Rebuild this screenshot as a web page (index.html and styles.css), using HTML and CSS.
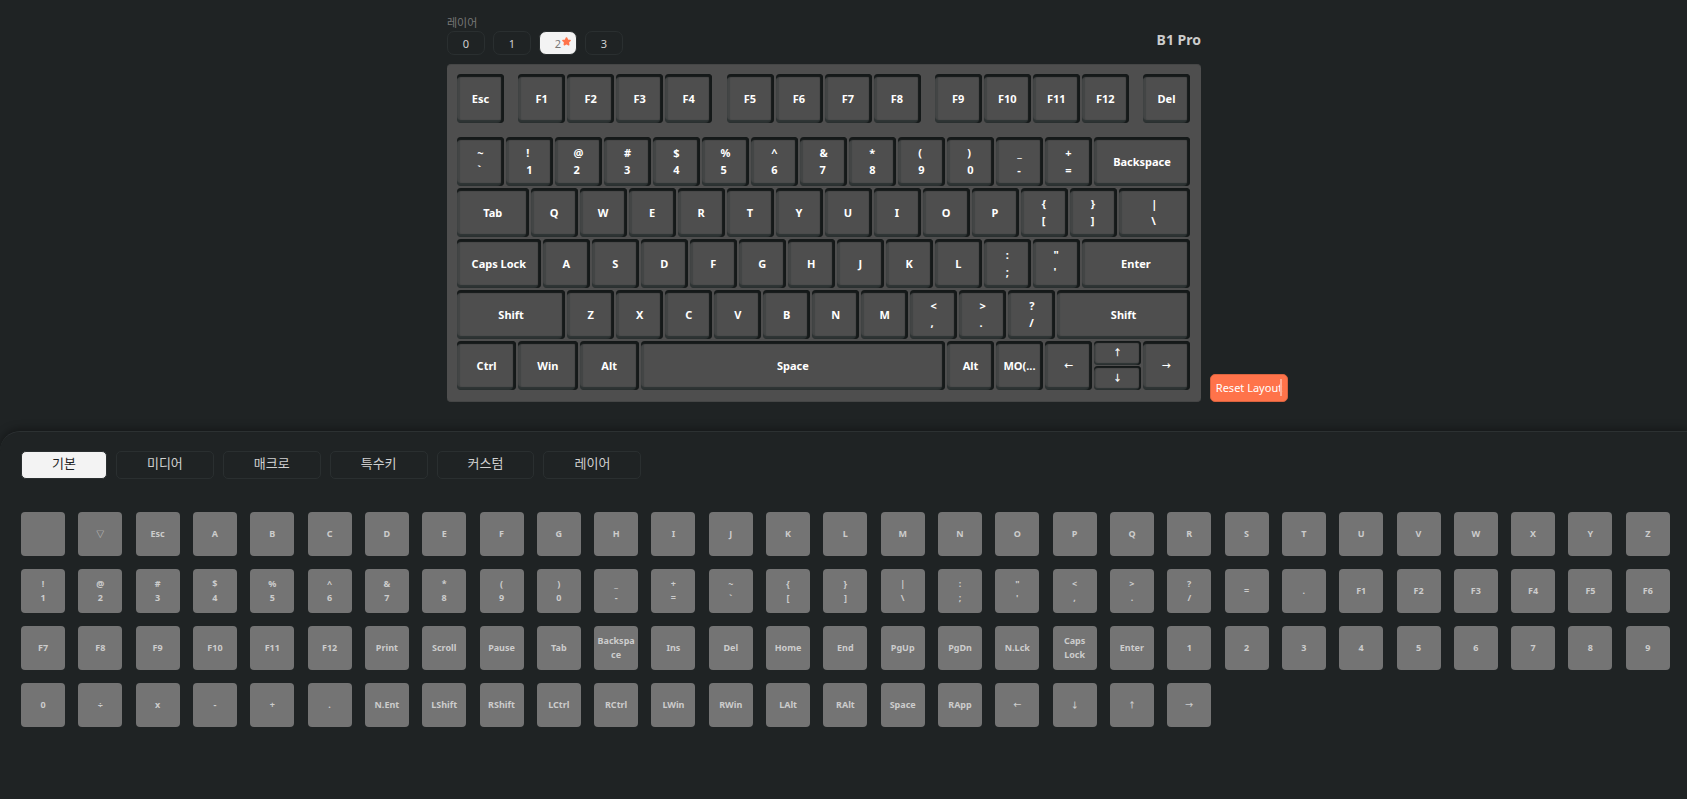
FILE: index.html
```html
<!DOCTYPE html>
<html lang="ko">
<head>
<meta charset="utf-8">
<title>B1 Pro</title>
<link rel="stylesheet" href="styles.css">
</head>
<body>
<main class="stage">
  <div class="editor">
    <header class="toolbar">
      <div>
        <h2 class="layer-title">레이어</h2>
        <div class="layers">
          <button class="layer">0</button>
          <button class="layer">1</button>
          <button class="layer layer-active">2<svg class="star" viewBox="0 0 24 24" aria-hidden="true"><path d="M12 2.500l2.900 6 6.600.9-4.800 4.600 1.200 6.600-5.900-3.200-5.900 3.200 1.200-6.600L2.500 9.400l6.600-.9z"/></svg></button>
          <button class="layer">3</button>
        </div>
      </div>
      <h1 class="device">B1 Pro</h1>
    </header>
    <div class="board">
      <div class="row row-fn">
        <button class="key">Esc</button><i class="gap"></i>
        <button class="key">F1</button><button class="key">F2</button><button class="key">F3</button><button class="key">F4</button><i class="gap"></i>
        <button class="key">F5</button><button class="key">F6</button><button class="key">F7</button><button class="key">F8</button><i class="gap"></i>
        <button class="key">F9</button><button class="key">F10</button><button class="key">F11</button><button class="key">F12</button><i class="gap"></i>
        <button class="key">Del</button>
      </div>
      <div class="row">
        <button class="key"><span class="pair">~<br>`</span></button>
        <button class="key"><span class="pair">!<br>1</span></button>
        <button class="key"><span class="pair">@<br>2</span></button>
        <button class="key"><span class="pair">#<br>3</span></button>
        <button class="key"><span class="pair">$<br>4</span></button>
        <button class="key"><span class="pair">%<br>5</span></button>
        <button class="key"><span class="pair">^<br>6</span></button>
        <button class="key"><span class="pair">&amp;<br>7</span></button>
        <button class="key"><span class="pair">*<br>8</span></button>
        <button class="key"><span class="pair">(<br>9</span></button>
        <button class="key"><span class="pair">)<br>0</span></button>
        <button class="key"><span class="pair">_<br>-</span></button>
        <button class="key"><span class="pair">+<br>=</span></button>
        <button class="key w-200">Backspace</button>
      </div>
      <div class="row">
        <button class="key w-150">Tab</button>
        <button class="key">Q</button><button class="key">W</button><button class="key">E</button><button class="key">R</button><button class="key">T</button><button class="key">Y</button><button class="key">U</button><button class="key">I</button><button class="key">O</button><button class="key">P</button>
        <button class="key"><span class="pair">{<br>[</span></button>
        <button class="key"><span class="pair">}<br>]</span></button>
        <button class="key w-150"><span class="pair">|<br>\</span></button>
      </div>
      <div class="row">
        <button class="key w-175">Caps Lock</button>
        <button class="key">A</button><button class="key">S</button><button class="key">D</button><button class="key">F</button><button class="key">G</button><button class="key">H</button><button class="key">J</button><button class="key">K</button><button class="key">L</button>
        <button class="key"><span class="pair">:<br>;</span></button>
        <button class="key"><span class="pair">"<br>'</span></button>
        <button class="key w-225">Enter</button>
      </div>
      <div class="row">
        <button class="key w-225">Shift</button>
        <button class="key">Z</button><button class="key">X</button><button class="key">C</button><button class="key">V</button><button class="key">B</button><button class="key">N</button><button class="key">M</button>
        <button class="key"><span class="pair">&lt;<br>,</span></button>
        <button class="key"><span class="pair">&gt;<br>.</span></button>
        <button class="key"><span class="pair">?<br>/</span></button>
        <button class="key w-275">Shift</button>
      </div>
      <div class="row">
        <button class="key w-125">Ctrl</button>
        <button class="key w-125">Win</button>
        <button class="key w-125">Alt</button>
        <button class="key w-625">Space</button>
        <button class="key">Alt</button>
        <button class="key">MO(...</button>
        <button class="key arrow">←</button>
        <div class="split">
          <button class="key key-half arrow">↑</button>
          <button class="key key-half arrow">↓</button>
        </div>
        <button class="key arrow">→</button>
      </div>
    </div>
  </div>
  <button class="reset">Reset Layout</button>
</main>

<section class="panel">
  <nav class="tabs">
    <button class="tab tab-active">기본</button>
    <button class="tab">미디어</button>
    <button class="tab">매크로</button>
    <button class="tab">특수키</button>
    <button class="tab">커스텀</button>
    <button class="tab">레이어</button>
  </nav>
  <div class="palette">
    <button class="cap" aria-label="None"></button><button class="cap cap-symbol">▽</button><button class="cap">Esc</button>
    <button class="cap">A</button><button class="cap">B</button><button class="cap">C</button><button class="cap">D</button><button class="cap">E</button><button class="cap">F</button><button class="cap">G</button><button class="cap">H</button><button class="cap">I</button><button class="cap">J</button><button class="cap">K</button><button class="cap">L</button><button class="cap">M</button><button class="cap">N</button><button class="cap">O</button><button class="cap">P</button><button class="cap">Q</button><button class="cap">R</button><button class="cap">S</button><button class="cap">T</button><button class="cap">U</button><button class="cap">V</button><button class="cap">W</button><button class="cap">X</button><button class="cap">Y</button><button class="cap">Z</button>
    <button class="cap">!<br>1</button><button class="cap">@<br>2</button><button class="cap">#<br>3</button><button class="cap">$<br>4</button><button class="cap">%<br>5</button><button class="cap">^<br>6</button><button class="cap">&amp;<br>7</button><button class="cap">*<br>8</button><button class="cap">(<br>9</button><button class="cap">)<br>0</button><button class="cap">_<br>-</button><button class="cap">+<br>=</button><button class="cap">~<br>`</button><button class="cap">{<br>[</button><button class="cap">}<br>]</button><button class="cap">|<br>\</button><button class="cap">:<br>;</button><button class="cap">"<br>'</button><button class="cap">&lt;<br>,</button><button class="cap">&gt;<br>.</button><button class="cap">?<br>/</button><button class="cap">=</button><button class="cap">.</button>
    <button class="cap">F1</button><button class="cap">F2</button><button class="cap">F3</button><button class="cap">F4</button><button class="cap">F5</button><button class="cap">F6</button><button class="cap">F7</button><button class="cap">F8</button><button class="cap">F9</button><button class="cap">F10</button><button class="cap">F11</button><button class="cap">F12</button>
    <button class="cap">Print</button><button class="cap">Scroll</button><button class="cap">Pause</button><button class="cap">Tab</button><button class="cap">Backspace</button><button class="cap">Ins</button><button class="cap">Del</button><button class="cap">Home</button><button class="cap">End</button><button class="cap">PgUp</button><button class="cap">PgDn</button><button class="cap">N.Lck</button><button class="cap">Caps Lock</button><button class="cap">Enter</button>
    <button class="cap">1</button><button class="cap">2</button><button class="cap">3</button><button class="cap">4</button><button class="cap">5</button><button class="cap">6</button><button class="cap">7</button><button class="cap">8</button><button class="cap">9</button><button class="cap">0</button><button class="cap">÷</button><button class="cap">x</button><button class="cap">-</button><button class="cap">+</button><button class="cap">.</button>
    <button class="cap">N.Ent</button><button class="cap">LShift</button><button class="cap">RShift</button><button class="cap">LCtrl</button><button class="cap">RCtrl</button><button class="cap">LWin</button><button class="cap">RWin</button><button class="cap">LAlt</button><button class="cap">RAlt</button><button class="cap">Space</button><button class="cap">RApp</button><button class="cap cap-symbol">←</button><button class="cap cap-symbol">↓</button><button class="cap cap-symbol">↑</button><button class="cap cap-symbol">→</button>
  </div>
</section>
</body>
</html>
```

FILE: styles.css
```css
* {
  box-sizing: border-box;
}

body {
  margin: 0;
  min-height: 100vh;
  display: flex;
  flex-direction: column;
  background: #1f2324;
  color: #d0d0d0;
  font-family: "Noto Sans", "Noto Sans CJK KR", sans-serif;
  font-size: 11px;
}

button {
  margin: 0;
  padding: 0;
  border: 0;
  font: inherit;
  color: inherit;
  cursor: pointer;
}

h1,
h2 {
  margin: 0;
}

/* Keyboard editor */
.stage {
  display: flex;
  justify-content: center;
  align-items: flex-end;
  gap: 9px;
  padding: 14px 0 29px 48px;
}

.toolbar {
  display: flex;
  justify-content: space-between;
  align-items: center;
  margin-bottom: 9px;
}

.layer-title {
  color: #777;
  font-size: 11px;
  line-height: 17px;
  font-weight: 400;
}

.layers {
  display: flex;
  gap: 8px;
}

.layer {
  position: relative;
  width: 38px;
  height: 24px;
  padding-top: 1px;
  border: 1px solid #2a2f30;
  border-radius: 7px;
  background: transparent;
  line-height: 21px;
}

.layer-active {
  background: #f3f3f3;
  color: #777;
}

.star {
  position: absolute;
  top: 5px;
  right: 5px;
  width: 9px;
  height: 9px;
  fill: #ff734a;
  stroke: #ff734a;
  stroke-width: 4;
  stroke-linejoin: round;
}

.device {
  padding-top: 10px;
  color: #ccc;
  font-size: 14px;
  line-height: 20px;
  font-weight: 700;
}

.board {
  width: 754px;
  padding: 9px 9px 9px 10px;
  border: 1px solid #454646;
  border-width: 1px 0;
  border-radius: 4px;
  background: #4e4e4e;
}

.row {
  display: grid;
  grid-template-columns: repeat(60, 1fr);
}

.row-fn {
  margin-bottom: 12px;
}

.key {
  grid-column: span 4;
  height: 49px;
  margin: 0 2px 2px 0;
  padding-bottom: 1px;
  display: flex;
  align-items: center;
  justify-content: center;
  border-radius: 4px;
  background: #4e4e4e;
  box-shadow:
    inset 0 4px 1px -1px #151919,
    inset -3px 0 1px #151919,
    inset 0 -3px 1px #2d3333,
    inset 3px 0 1px #434545;
  color: #fff;
  font-weight: 700;
  line-height: 17px;
}

.w-125 { grid-column: span 5; }
.w-150 { grid-column: span 6; }
.w-175 { grid-column: span 7; }
.w-200 { grid-column: span 8; }
.w-225 { grid-column: span 9; }
.w-275 { grid-column: span 11; }
.w-625 { grid-column: span 25; }

.pair {
  text-align: left;
}

.arrow {
  font-size: 9px;
}

.split {
  grid-column: span 4;
  display: flex;
  flex-direction: column;
  gap: 1px;
  margin: 0 2px 2px 0;
}

.key-half {
  height: 24px;
  margin: 0;
  box-shadow:
    inset 0 2px 1px #151919,
    inset -2px 0 1px #151919,
    inset 0 -2px 1px #2d3333,
    inset 2px 0 1px #434545;
}

.reset {
  position: relative;
  width: 78px;
  height: 28px;
  border: 1px solid #d9633f;
  border-radius: 5px;
  background: #ff734a;
  color: #fff;
  line-height: 24px;
}

/* Text caret at the end of the label */
.reset::after {
  content: "";
  position: absolute;
  top: 4px;
  right: 5px;
  width: 2px;
  height: 17px;
  background: #ffab92;
}

/* Key palette */
.panel {
  flex: 1;
  padding: 19px 17px 20px 21px;
  border-top: 1px solid #2c3132;
  border-radius: 20px 0 0 0;
  background: #1f2324;
  box-shadow: 0 -2px 8px rgba(0, 0, 0, 0.35);
}

.tabs {
  display: flex;
  gap: 9px;
  margin-bottom: 33px;
}

.tab {
  height: 28px;
  padding: 0 30px 3px;
  border: 1px solid #2a2f30;
  border-radius: 5px;
  background: transparent;
  font-size: 13px;
  line-height: 23px;
}

.tab-active {
  background: #f3f3f3;
  color: #1f2324;
}

.palette {
  display: grid;
  grid-template-columns: repeat(auto-fill, 44px);
  justify-content: space-between;
  gap: 13px;
}

.cap {
  height: 44px;
  padding: 0 2px;
  border-radius: 4px;
  background: #747474;
  color: #ccc;
  font-size: 9px;
  line-height: 14px;
  font-weight: 700;
  overflow-wrap: anywhere;
}

.cap-symbol {
  font-size: 8px;
}
```
